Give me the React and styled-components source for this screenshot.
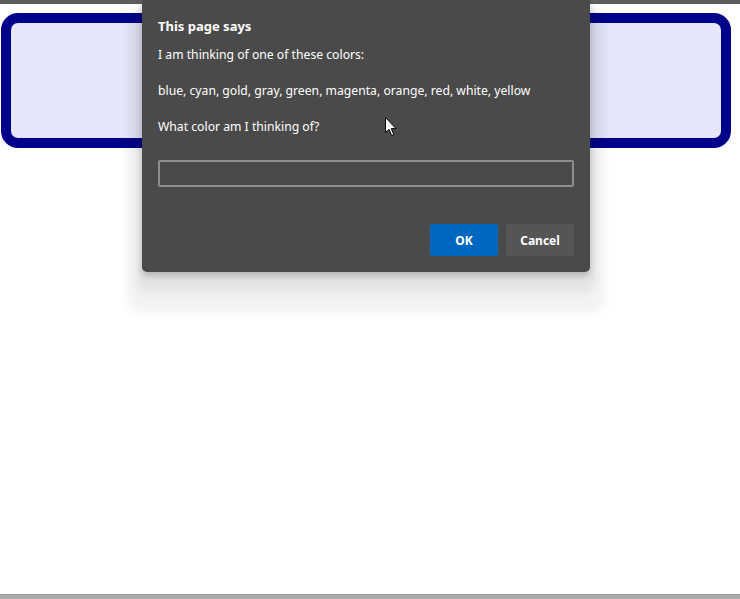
import styled, { createGlobalStyle } from "styled-components";

const Global = createGlobalStyle`
  html, body {
    margin: 0;
    padding: 0;
    background: #fff;
  }
  body {
    font-family: "Segoe UI", "Noto Sans", "Open Sans", sans-serif;
  }
`

const Screen = styled.div`
  position: relative;
  width: 740px;
  height: 599px;
  overflow: hidden;
  display: flex;
  flex-direction: column;
  background: #fff;
`

const TopBar = styled.div`
  height: 4px;
  background: #5d5d60;
  flex-shrink: 0;
`

const Page = styled.div`
  flex: 1;
  padding: 9px 9px 0 1px;
`

const Banner = styled.div`
  height: 115px;
  border: 10px solid #00008b;
  border-radius: 17px;
  background: #e6e6fa;
`

const StatusStrip = styled.div`
  height: 4px;
  flex-shrink: 0;
  background: #ababab;
  border-top: 1px solid #9a9a9a;
`

// the prompt() dialog lies over the page
const Dialog = styled.div`
  position: absolute;
  left: 142px;
  top: 0;
  width: 448px;
  height: 272px;
  box-sizing: border-box;
  padding: 17px 16px 16px;
  background: #4a4a4a;
  border-radius: 0 0 5px 5px;
  box-shadow:
    0 26px 8px 15px rgba(0, 0, 0, 0.05),
    0 14px 10px 6px rgba(0, 0, 0, 0.06),
    0 4px 6px rgba(0, 0, 0, 0.2);
  color: #fff;
  display: flex;
  flex-direction: column;
`

const Title = styled.div`
  font-size: 13px;
  font-weight: 700;
  line-height: 18px;
`

const Message = styled.p`
  margin: ${p => p.top}px 0 0;
  font-size: 12.2px;
  line-height: 18px;
`

const Field = styled.input`
  margin-top: 24px;
  height: 27px;
  box-sizing: border-box;
  width: 100%;
  background: #4a4a4a;
  border: 2px solid #8e8e8e;
  border-radius: 2px;
  outline: none;
`

const Actions = styled.div`
  margin-top: 37px;
  display: flex;
  justify-content: flex-end;
  gap: 8px;
`

const Button = styled.button`
  width: 68px;
  height: 32px;
  border: none;
  border-radius: 2px;
  font-family: inherit;
  font-size: 12px;
  font-weight: 700;
  color: #fff;
  background: ${p => (p.primary ? "#0067c0" : "#555555")};
`

const Cursor = styled.svg`
  position: absolute;
  left: 385px;
  top: 117px;
`

export default function App() {
  return (
    <>
      <Global />
      <Screen>
        <TopBar />
        <Page>
          <Banner />
        </Page>
        <StatusStrip />

        <Dialog>
          <Title>This page says</Title>
          <Message top={11}>I am thinking of one of these colors:</Message>
          <Message top={18}>blue, cyan, gold, gray, green, magenta, orange, red, white, yellow</Message>
          <Message top={18}>What color am I thinking of?</Message>
          <Field />
          <Actions>
            <Button primary>OK</Button>
            <Button>Cancel</Button>
          </Actions>
        </Dialog>

        <Cursor width="12" height="20" viewBox="0 0 12 20">
          <path
            d="M0.5 0.5 L0.5 15.5 L4 12.3 L6.6 18.5 L8.8 17.6 L6.3 11.6 L11 11.6 Z"
            fill="#fff"
            stroke="#000"
            strokeWidth="1"
            strokeLinejoin="miter"
          />
        </Cursor>
      </Screen>
    </>
  )
}
